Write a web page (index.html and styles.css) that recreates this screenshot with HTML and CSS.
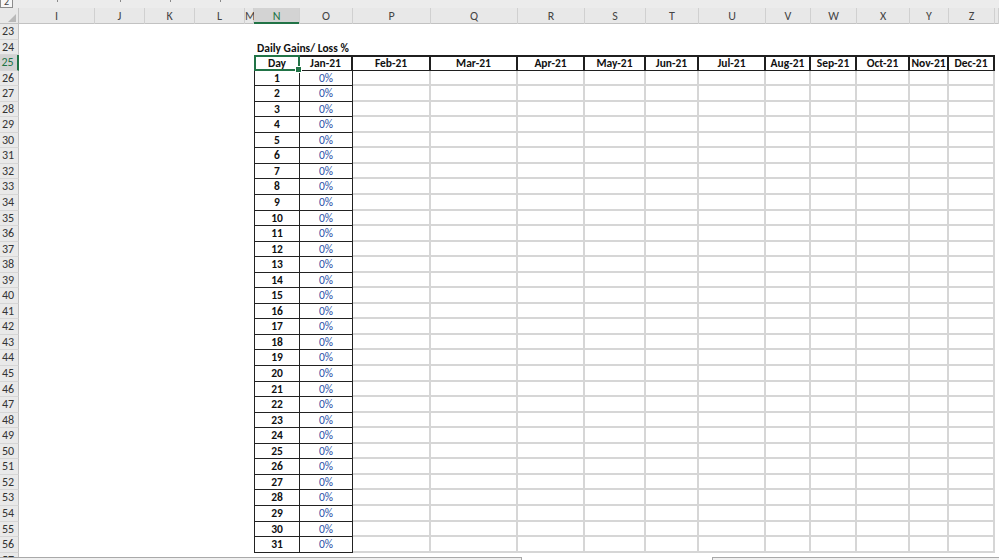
FILE: index.html
```html
<!DOCTYPE html>
<html lang="en">

<head>
    <meta charset="UTF-8">
    <title>Daily Gains</title>
    <link rel="stylesheet" href="styles.css">
</head>

<body>

    <div class="outline">
        <div><span class="nivel">2</span></div>
        <div><span class="marca"></span></div>
        <div><span class="marca"></span></div>
        <div><span class="marca"></span></div>
        <div><span class="marca"></span></div>
    </div>

    <div class="colunas">
        <div class="col canto"></div>
        <div class="col">I</div>
        <div class="col">J</div>
        <div class="col">K</div>
        <div class="col">L</div>
        <div class="col">M</div>
        <div class="col ativa">N</div>
        <div class="col">O</div>
        <div class="col">P</div>
        <div class="col">Q</div>
        <div class="col">R</div>
        <div class="col">S</div>
        <div class="col">T</div>
        <div class="col">U</div>
        <div class="col">V</div>
        <div class="col">W</div>
        <div class="col">X</div>
        <div class="col">Y</div>
        <div class="col">Z</div>
        <div class="col"></div>
    </div>

    <div class="planilha" id="planilha"></div>

    <div class="rodape">
        <div class="abas"></div>
        <div class="rolagem"></div>
    </div>

    <script>
        var meses = ["Jan-21", "Feb-21", "Mar-21", "Apr-21", "May-21", "Jun-21",
            "Jul-21", "Aug-21", "Sep-21", "Oct-21", "Nov-21", "Dec-21"];
        const planilha = document.getElementById("planilha");

        function celula(classe, texto) {
            let div = document.createElement("div");
            div.className = classe;
            if (texto) div.textContent = texto;
            planilha.appendChild(div);
        }

        for (let linha = 23; linha <= 57; linha++) {
            celula(linha == 25 ? "rh ativa" : "rh", String(linha));
            celula("vazio");

            if (linha == 24) {
                celula("cel titulo", "Daily Gains/ Loss %");
                for (let i = 0; i < 12; i++) celula("cel");
            } else if (linha == 25) {
                celula("cel hd dia sel", "Day");
                for (let i = 0; i < 12; i++) celula("cel hd", meses[i]);
            } else if (linha > 25 && linha < 57) {
                celula("cel dia", String(linha - 25));
                celula("cel jan", "0%");
                for (let i = 0; i < 11; i++) celula("cel mes");
            } else {
                for (let i = 0; i < 13; i++) celula("cel");
            }
            celula("cel");
        }
    </script>
</body>

</html>
```

FILE: styles.css
```css
body {
    margin: 0;
    width: 999px;
    height: 560px;
    overflow: hidden;
    background: #fff;
    color: #111;
    font-family: Carlito, Calibri, Lato, sans-serif;
    font-size: 11px;
}

.outline,
.colunas,
.planilha {
    display: grid;
    grid-template-columns: 19px 76px 50px 50px 50px 9px 46px 53px 78px 87px 67px 61px 53px 67px 45px 46px 53px 39px 46px 4px;
}

.outline {
    height: 8px;
    overflow: hidden;
    background: #ececec;
}

.outline div {
    display: flex;
    justify-content: center;
}

.nivel {
    display: block;
    box-sizing: border-box;
    width: 13px;
    height: 12px;
    margin: -4px auto 0 0;
    border: 1px solid #8c8c8c;
    background: #f7f7f7;
    color: #444;
    font-size: 10px;
    line-height: 10px;
    text-align: center;
}

.marca {
    display: block;
    width: 1px;
    height: 2px;
    background: #8a8a8a;
}

.colunas {
    height: 16px;
    box-sizing: border-box;
    background: #e8e8e8;
    border-bottom: 1px solid #c2c2c2;
}

.col {
    border-right: 1px solid #d0d0d0;
    color: #444;
    font-size: 12px;
    line-height: 16px;
    text-align: center;
}

.col.ativa {
    background: #d3d3d3;
    color: #217346;
    box-shadow: inset 0 -2px 0 #217346;
}

.canto {
    position: relative;
    border-right: 1px solid #c2c2c2;
}

.canto::after {
    content: '';
    position: absolute;
    right: 2px;
    bottom: 2px;
    border-left: 8px solid transparent;
    border-bottom: 8px solid #b9b9b9;
}

.planilha {
    grid-auto-rows: 15.56px;
    height: 533px;
    overflow: hidden;
}

.rh {
    box-sizing: border-box;
    padding-right: 2px;
    background: #e9e9e9;
    border-right: 1px solid #c2c2c2;
    border-bottom: 1px solid #d6d6d6;
    color: #333;
    font-size: 12px;
    line-height: 15px;
    text-align: center;
}

.rh.ativa {
    background: #d3d3d3;
    color: #217346;
    border-right: 2px solid #217346;
}

.vazio {
    grid-column: span 5;
}

.cel {
    box-sizing: border-box;
    font-size: 11.5px;
    line-height: 15px;
    text-align: center;
    white-space: nowrap;
}

.titulo {
    padding-left: 3px;
    font-weight: bold;
    text-align: left;
    line-height: 17px;
    overflow: visible;
}

.hd {
    font-weight: bold;
    line-height: 13px;
    border-top: 2px solid #1f1f1f;
    border-right: 2px solid #1f1f1f;
    border-bottom: 1px solid #1f1f1f;
}

.dia {
    font-weight: bold;
    border-left: 1px solid #222;
    border-right: 1px solid #222;
    border-bottom: 1px solid #222;
}

.jan {
    color: #2b52a8;
    border-right: 1px solid #222;
    border-bottom: 1px solid #222;
}

.mes {
    border-right: 2px solid #d6d6d6;
    border-bottom: 2px solid #d6d6d6;
}

.sel {
    position: relative;
    border: 2px solid #217346;
}

.sel::after {
    content: '';
    position: absolute;
    right: -4px;
    bottom: -4px;
    width: 5px;
    height: 5px;
    background: #217346;
    border: 1px solid #fff;
}

.rodape {
    display: flex;
    justify-content: space-between;
    height: 3px;
}

.abas {
    width: 522px;
    box-sizing: border-box;
    background: #f0f0f0;
    border-top: 1px solid #a9a9a9;
    border-right: 1px solid #a9a9a9;
}

.rolagem {
    width: 287px;
    box-sizing: border-box;
    background: #f0f0f0;
    border-top: 1px solid #a9a9a9;
    border-left: 1px solid #a9a9a9;
}
```
